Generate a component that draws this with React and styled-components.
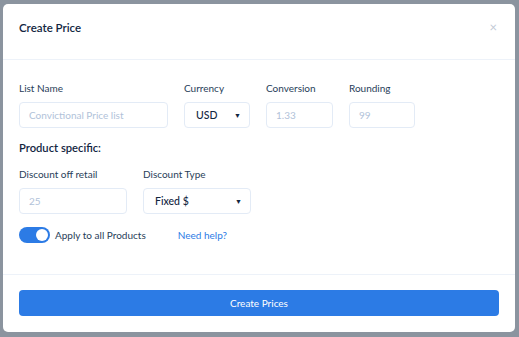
import styled, { createGlobalStyle } from "styled-components";

const Global = createGlobalStyle`
  html, body { margin: 0; padding: 0; }
  body {
    width: 519px;
    height: 337px;
    overflow: hidden;
    background: #8b949f;
    font-family: Lato, "Open Sans", sans-serif;
  }
`;

const Backdrop = styled.div`
  width: 519px;
  height: 337px;
  box-sizing: border-box;
  padding: 4px 4px 5px 3px;
`;

const Modal = styled.div`
  background: #fff;
  border-radius: 5px;
  height: 100%;
  display: flex;
  flex-direction: column;
  overflow: hidden;
`;

const Header = styled.div`
  height: 56px;
  box-sizing: border-box;
  padding: 16px 16px 0;
  display: flex;
  align-items: flex-start;
  justify-content: space-between;
  border-bottom: 1px solid #edf2f9;
`;

const Title = styled.h2`
  margin: 0;
  font-size: 11.5px;
  line-height: 16px;
  font-weight: 600;
  color: #12263f;
`;

const Close = styled.span`
  color: #c2cad6;
  font-size: 13px;
  line-height: 14px;
  margin-right: 2px;
`;

const Body = styled.div`
  flex: 1;
  padding: 22px 16px 0;
  border-bottom: 1px solid #edf2f9;
`;

const Row = styled.div`
  display: flex;
  gap: 16px;
`;

const Field = styled.div`
  display: flex;
  flex-direction: column;
  width: ${(p) => p.w}px;
`;

const Label = styled.label`
  font-size: 10px;
  color: #283e59;
  margin-bottom: 7px;
  height: 13px;
`;

const Input = styled.div`
  height: 26px;
  box-sizing: border-box;
  border: 1px solid #e3ebf6;
  border-radius: 4px;
  padding: 0 9px;
  display: flex;
  align-items: center;
  font-size: 10px;
  color: #b1c2d9;
`;

const Select = styled(Input)`
  color: #12263f;
  font-size: 10.5px;
  font-weight: 500;
  justify-content: space-between;
  padding: 0 8px 0 11px;
`;

const Caret = styled.span`
  font-size: 7px;
  color: #12263f;
`;

const Section = styled.h3`
  margin: 13px 0 14px;
  font-size: 11.2px;
  font-weight: 600;
  color: #12263f;
`;

const ToggleRow = styled.div`
  display: flex;
  align-items: center;
  margin-top: 13px;
  font-size: 10px;
  color: #283e59;
`;

const Switch = styled.div`
  width: 31px;
  height: 16px;
  border-radius: 8px;
  background: #2c7be5;
  position: relative;
  margin-right: 5px;
  &::after {
    content: "";
    position: absolute;
    right: 2px;
    top: 2px;
    width: 12px;
    height: 12px;
    border-radius: 50%;
    background: #fff;
  }
`;

const Help = styled.a`
  color: #2c7be5;
  margin-left: 32px;
  text-decoration: none;
`;

const Footer = styled.div`
  padding: 15px 16px 16px;
`;

const Button = styled.button`
  width: 100%;
  height: 26px;
  border: none;
  border-radius: 4px;
  background: #2c7be5;
  color: #fff;
  font-family: inherit;
  font-size: 10px;
`;

export default function App() {
  return (
    <>
      <Global />
      <Backdrop>
        <Modal>
          <Header>
            <Title>Create Price</Title>
            <Close>×</Close>
          </Header>
          <Body>
            <Row>
              <Field w={149}>
                <Label>List Name</Label>
                <Input>Convictional Price list</Input>
              </Field>
              <Field w={66}>
                <Label>Currency</Label>
                <Select>
                  USD <Caret>▼</Caret>
                </Select>
              </Field>
              <Field w={67}>
                <Label>Conversion</Label>
                <Input>1.33</Input>
              </Field>
              <Field w={66}>
                <Label>Rounding</Label>
                <Input>99</Input>
              </Field>
            </Row>
            <Section>Product specific:</Section>
            <Row>
              <Field w={108}>
                <Label>Discount off retail</Label>
                <Input>25</Input>
              </Field>
              <Field w={108}>
                <Label>Discount Type</Label>
                <Select>
                  Fixed $ <Caret>▼</Caret>
                </Select>
              </Field>
            </Row>
            <ToggleRow>
              <Switch />
              Apply to all Products
              <Help>Need help?</Help>
            </ToggleRow>
          </Body>
          <Footer>
            <Button>Create Prices</Button>
          </Footer>
        </Modal>
      </Backdrop>
    </>
  );
}
